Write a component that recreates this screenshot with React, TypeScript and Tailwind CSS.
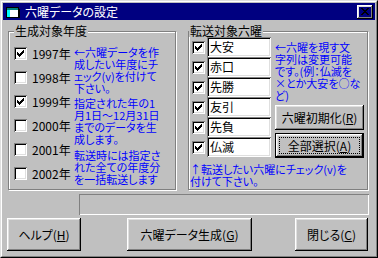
import React from "react";

const raised =
  "shadow-[inset_-1px_-1px_0_#000,inset_1px_1px_0_#fff,inset_-2px_-2px_0_#808080,inset_2px_2px_0_#dfdfdf]";
const sunken =
  "shadow-[inset_1px_1px_0_#808080,inset_-1px_-1px_0_#fff,inset_2px_2px_0_#000,inset_-2px_-2px_0_#dfdfdf]";

function Check() {
  return (
    <svg width="7" height="7" viewBox="0 0 7 7" shapeRendering="crispEdges">
      <path
        fill="#000"
        d="M6 0h1v3h-1v1h-1v1h-1v1h-1v1h-1v-1h-1v-1h-1v-3h1v1h1v1h1v-1h1v-1h1z"
      />
    </svg>
  );
}

function CheckBox({ checked }: { checked: boolean }) {
  return (
    <div
      className={`flex h-[13px] w-[13px] shrink-0 items-center justify-center bg-white ${sunken}`}
    >
      {checked && <Check />}
    </div>
  );
}

function GroupBox({
  label,
  width,
  labelLeft,
  children,
}: {
  label: string;
  width: string;
  labelLeft: string;
  children: React.ReactNode;
}) {
  return (
    <div
      className={`relative h-[159px] ${width} border border-[#808080] shadow-[inset_1px_1px_0_#fff,1px_1px_0_#fff]`}
    >
      <span
        className={`absolute -top-[7px] ${labelLeft} bg-[#c0c0c0] px-[1px] leading-[12px] text-black`}
      >
        {label}
      </span>
      {children}
    </div>
  );
}

function Button({
  children,
  width,
  height,
  isDefault,
}: {
  children: React.ReactNode;
  width: string;
  height: string;
  isDefault?: boolean;
}) {
  if (isDefault) {
    return (
      <div className={`${width} ${height} border border-black`}>
        <div className={`flex h-full w-full items-center justify-center p-[3px] ${raised}`}>
          <div className="flex h-full w-full items-center justify-center border border-dotted border-black">
            {children}
          </div>
        </div>
      </div>
    );
  }
  return (
    <div className={`flex ${width} ${height} items-center justify-center ${raised}`}>
      {children}
    </div>
  );
}

const years = [
  { y: "1997年", c: true },
  { y: "1998年", c: false },
  { y: "1999年", c: true },
  { y: "2000年", c: false },
  { y: "2001年", c: false },
  { y: "2002年", c: false },
];

const rokuyo = ["大安", "赤口", "先勝", "友引", "先負", "仏滅"];

export default function App() {
  return (
    <div className="h-[258px] w-[378px] overflow-hidden bg-[#c0c0c0] font-['Noto_Sans_CJK_JP','Noto_Sans',sans-serif] text-[12px] text-black [font-feature-settings:'palt']">
      <div className="h-full w-full border border-b-black border-l-[#dfdfdf] border-r-black border-t-[#dfdfdf]">
        <div className="h-full w-full border border-b-[#808080] border-l-white border-r-[#808080] border-t-white p-[1px]">
          {/* title bar */}
          <div className="flex h-[17px] items-center bg-[#000080] pl-[3px] pr-[2px]">
            <svg width="14" height="12" viewBox="0 0 14 12" shapeRendering="crispEdges">
              <rect x="0.5" y="1.5" width="12" height="10" fill="#fff" stroke="#000" />
              <rect x="1" y="2" width="11" height="2" fill="#008080" />
              <rect x="1" y="4" width="3" height="7" fill="#00ffff" />
              <rect x="12" y="3" width="2" height="9" fill="#000" />
            </svg>
            <span className="ml-[5px] leading-[12px] text-white">六曜データの設定</span>
            <div className={`ml-auto flex h-[14px] w-[16px] items-center justify-center ${raised}`}>
              <svg width="8" height="7" viewBox="0 0 8 7" shapeRendering="crispEdges">
                <path
                  fill="#000"
                  d="M0 0h2v1h1v1h2v-1h1v-1h2v1h-1v1h-1v1h-1v1h1v1h1v1h1v1h-2v-1h-1v-1h-2v1h-1v1h-2v-1h1v-1h1v-1h1v-1h-1v-1h-1v-1h-1z"
                />
              </svg>
            </div>
          </div>

          {/* groups */}
          <div className="mt-[11px] flex gap-[12px] pl-[5px]">
            <GroupBox label="生成対象年度" width="w-[168px]" labelLeft="left-[5px]">
              <div className="flex">
                <div className="flex w-[65px] flex-col gap-[11px] pl-[5px] pt-[15px]">
                  {years.map((r) => (
                    <div key={r.y} className="flex h-[13px] items-center gap-[5px]">
                      <CheckBox checked={r.c} />
                      <span className="whitespace-nowrap leading-[12px]">{r.y}</span>
                    </div>
                  ))}
                </div>
                <div className="whitespace-nowrap pt-[14px] text-[11px] text-[#0000ff] leading-[12px]">
                  <p>
                    ←六曜データを作
                    <br />
                    成したい年度にチ
                    <br />
                    ェック(v)を付けて
                    <br />
                    下さい。
                  </p>
                  <p className="mt-[3px]">
                    指定された年の1
                    <br />
                    月1日～12月31日
                    <br />
                    までのデータを生
                    <br />
                    成します。
                  </p>
                  <p className="mt-[4px]">
                    転送時には指定さ
                    <br />
                    れた全ての年度分
                    <br />
                    を一括転送します
                  </p>
                </div>
              </div>
            </GroupBox>

            <GroupBox label="転送対象六曜" width="w-[180px]" labelLeft="left-0">
              <div className="flex flex-col">
                <div className="flex items-start pt-[5px]">
                  <div className="flex flex-col pl-[3px]">
                    {rokuyo.map((n) => (
                      <div key={n} className="flex h-[20px] items-center gap-[2px]">
                        <CheckBox checked />
                        <div
                          className={`flex h-[20px] w-[64px] items-center bg-white pl-[3px] leading-[12px] ${sunken}`}
                        >
                          {n}
                        </div>
                      </div>
                    ))}
                  </div>
                  <div className="ml-[4px] mt-[4px] flex flex-col">
                    <p className="whitespace-nowrap text-[11px] text-[#0000ff] leading-[12px]">
                      ←六曜を現す文
                      <br />
                      字列は変更可能
                      <br />
                      です。(例：仏滅を
                      <br />
                      ×とか大安を○な
                      <br />
                      ど)
                    </p>
                    <div className="mt-[4px]">
                      <Button width="w-[89px]" height="h-[25px]">
                        <span className="leading-[12px]">
                          六曜初期化(<span className="underline">R</span>)
                        </span>
                      </Button>
                    </div>
                    <div className="mt-[3px]">
                      <Button width="w-[89px]" height="h-[25px]" isDefault>
                        <span className="leading-[12px]">
                          全部選択(<span className="underline">A</span>)
                        </span>
                      </Button>
                    </div>
                  </div>
                </div>
                <p className="mt-[5px] whitespace-nowrap pl-[1px] text-[11px] text-[#0000ff] leading-[12px]">
                  ↑転送したい六曜にチェック(v)を
                  <br />
                  付けて下さい。
                </p>
              </div>
            </GroupBox>
          </div>

          {/* status field */}
          <div className="ml-[76px] mt-[4px] h-[21px] w-[290px] shadow-[inset_1px_1px_0_#808080,inset_-1px_-1px_0_#fff]" />

          {/* bottom buttons */}
          <div className="mt-[3px] flex pl-[4px]">
            <Button width="w-[74px]" height="h-[33px]">
              <span className="leading-[12px]">
                ヘルプ(<span className="underline">H</span>)
              </span>
            </Button>
            <div className="ml-[46px]">
              <Button width="w-[125px]" height="h-[33px]">
                <span className="leading-[12px]">
                  六曜データ生成(<span className="underline">G</span>)
                </span>
              </Button>
            </div>
            <div className="ml-[43px]">
              <Button width="w-[73px]" height="h-[33px]">
                <span className="leading-[12px]">
                  閉じる(<span className="underline">C</span>)
                </span>
              </Button>
            </div>
          </div>
        </div>
      </div>
    </div>
  );
}
